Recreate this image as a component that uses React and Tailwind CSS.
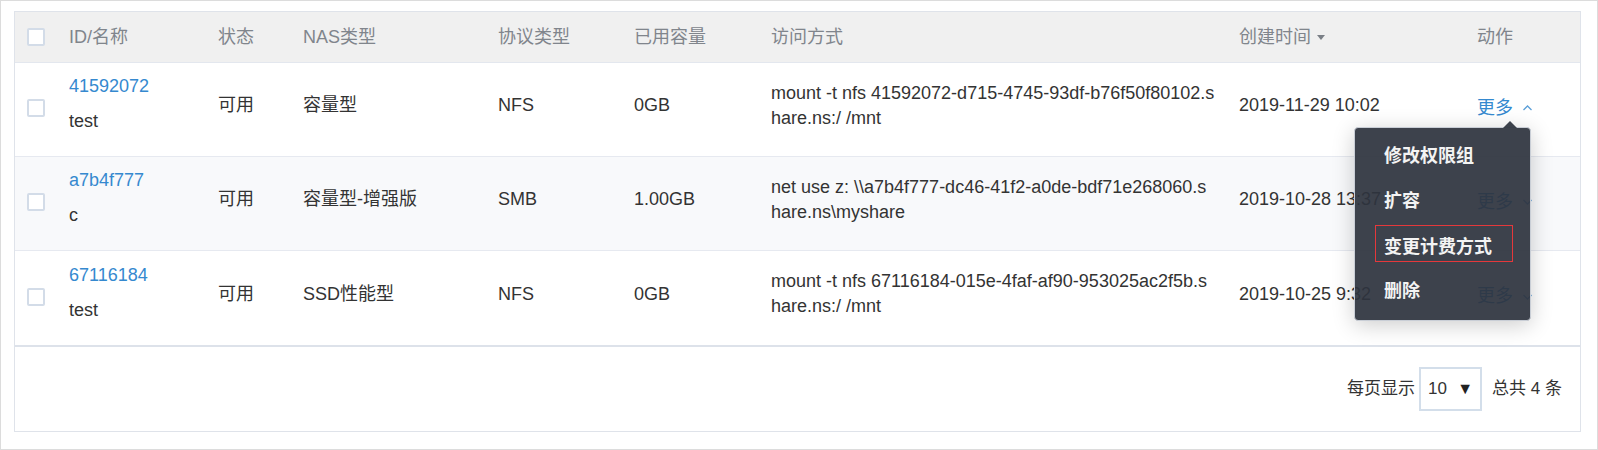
import React from 'react';

const rows = [
  { id: '41592072', name: 'test', status: '可用', type: '容量型', proto: 'NFS', used: '0GB', access: ['mount -t nfs 41592072-d715-4745-93df-b76f50f80102.s', 'hare.ns:/ /mnt'], created: '2019-11-29 10:02', open: true },
  { id: 'a7b4f777', name: 'c', status: '可用', type: '容量型-增强版', proto: 'SMB', used: '1.00GB', access: ['net use z: \\\\a7b4f777-dc46-41f2-a0de-bdf71e268060.s', 'hare.ns\\myshare'], created: '2019-10-28 13:37', shaded: true },
  { id: '67116184', name: 'test', status: '可用', type: 'SSD性能型', proto: 'NFS', used: '0GB', access: ['mount -t nfs 67116184-015e-4faf-af90-953025ac2f5b.s', 'hare.ns:/ /mnt'], created: '2019-10-25 9:32', last: true },
];

const menuItems = ['修改权限组', '扩容', '变更计费方式', '删除'];

const cols = 'grid grid-cols-[54px_149px_85px_195px_136px_137px_468px_238px_103px]';

function Checkbox({ className = '' }) {
  return <span className={`block w-[18px] h-[18px] border-2 border-[#d3dce8] bg-white rounded-[2px] ${className}`} />;
}

function Chevron({ up }) {
  return (
    <svg width="11" height="8" viewBox="0 0 11 8" className="ml-[9px]">
      <polyline
        points={up ? '1.5,6 5.5,2 9.5,6' : '1.5,2 5.5,6 9.5,2'}
        fill="none"
        stroke="#5b9fd8"
        strokeWidth="1.3"
      />
    </svg>
  );
}

export default function App() {
  return (
    <div
      className="w-[1598px] h-[450px] border border-[#dcdcdc] bg-white pl-[13px] pt-[10px] pr-[16px] text-[18px] text-[#333]"
      style={{ fontFamily: '"Liberation Sans", "Noto Sans CJK SC", sans-serif' }}
    >
      <div className="relative border border-[#dfe3ea]">
        {/* header */}
        <div className={`${cols} h-[51px] items-center bg-[#f0f0f0] border-b border-[#e3e7ee] text-[#80858c]`}>
          <div className="pl-[12px]"><Checkbox /></div>
          <div>ID/名称</div>
          <div>状态</div>
          <div>NAS类型</div>
          <div>协议类型</div>
          <div>已用容量</div>
          <div>访问方式</div>
          <div className="flex items-center">
            创建时间
            <svg width="8" height="5" viewBox="0 0 8 5" className="ml-[6px]">
              <polygon points="0,0 8,0 4,5" fill="#7a7f86" />
            </svg>
          </div>
          <div>动作</div>
        </div>

        {rows.map(r => (
          <div
            key={r.id}
            className={`${cols} items-center pb-[8px] ${r.last ? 'h-[96px] border-b-2 border-[#dde2ea]' : 'h-[94px] border-b border-[#e6e9f0]'} ${r.shaded ? 'bg-[#f8f9fb]' : 'bg-white'}`}
          >
            <div className="pl-[12px]"><Checkbox className="mt-[5px]" /></div>
            <div className="flex flex-col mb-[4px]">
              <span className="leading-[24px] text-[#3589cf]">{r.id}</span>
              <span className="leading-[24px] mt-[11px]">{r.name}</span>
            </div>
            <div>{r.status}</div>
            <div>{r.type}</div>
            <div>{r.proto}</div>
            <div>{r.used}</div>
            <div className="leading-[25px] whitespace-nowrap">
              <div>{r.access[0]}</div>
              <div>{r.access[1]}</div>
            </div>
            <div className="whitespace-nowrap">{r.created}</div>
            <div className="flex items-center mt-[5px] text-[#3589cf]">
              更多
              <Chevron up={r.open} />
            </div>
          </div>
        ))}

        {/* footer */}
        <div className="h-[84px] flex items-center justify-end pr-[18px] text-[17px]">
          <span>每页显示</span>
          <div className="ml-[4px] w-[63px] h-[44px] border-2 border-[#d3deea] flex items-center justify-between pl-[7px] pr-[7px]">
            <span>10</span>
            <span className="text-[16px] text-[#222]">▼</span>
          </div>
          <span className="ml-[10px]">总共 4 条</span>
        </div>

        {/* dropdown menu */}
        <div className="absolute left-[1339px] top-[115px] w-[177px]">
          <svg width="14" height="7" viewBox="0 0 14 7" className="absolute right-[14px] -top-[6px]">
            <polygon points="0,7 7,0 14,7" fill="rgba(46,52,62,0.93)" />
          </svg>
          <div className="rounded-[4px] border border-[#c9ced6] bg-[rgba(46,52,62,0.93)] shadow-[0_4px_22px_rgba(0,0,0,0.2)] py-[6px] text-[#f3f3f3] font-bold">
            {menuItems.map((m, i) =>
              i === 2 ? (
                <div key={m} className="h-[45px] pl-[20px] pr-[17px] pt-[1px]">
                  <div className="h-[37px] border border-[#e5383b] pl-[8px] pt-[7px] flex items-center">{m}</div>
                </div>
              ) : (
                <div key={m} className="h-[45px] px-[29px] flex items-center">{m}</div>
              )
            )}
          </div>
        </div>
      </div>
    </div>
  );
}
